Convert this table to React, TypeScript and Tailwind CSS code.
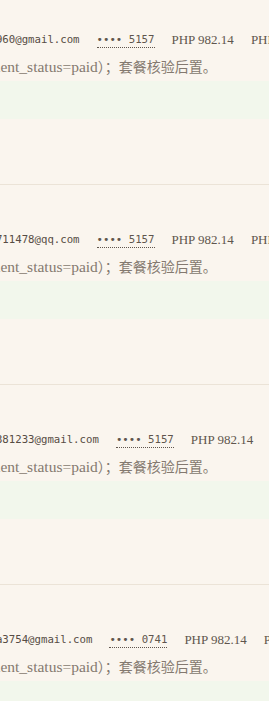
const rows = [
  { email: "mariacruz960@gmail.com", card: "5157" },
  { email: "zhangwei.711478@qq.com", card: "5157" },
  { email: "jdelacruz381233@gmail.com", card: "5157" },
  { email: "reyes.anna3754@gmail.com", card: "0741" },
];

const serif = "font-['Liberation_Serif','Noto_Sans_CJK_SC',serif]";
const mono = "font-['DejaVu_Sans_Mono',monospace] text-[10.7px]";

function OrderRow({ email, card }: { email: string; card: string }) {
  return (
    <div className="h-[200px] border-b border-[#ebe3d7] pt-[45px]">
      <div className="flex items-center gap-[17px] whitespace-nowrap">
        <span className={`${mono} text-[#564c44]`}>{email}</span>
        <span className={`${mono} border-b border-dotted border-[#5f554d] leading-[15px] text-[#5f554d]`}>
          •••• {card}
        </span>
        <span className={`${serif} text-[13px] text-[#5f554d]`}>PHP 982.14</span>
        <span className={`${serif} text-[13px] text-[#5f554d]`}>PHP 982.14</span>
      </div>
      <p className={`${serif} -ml-[28px] mt-[7px] whitespace-nowrap text-[14px] leading-5 text-[#84796f]`}>
        已支付（<span className="text-[15.5px]">payment_status=paid</span>）；套餐核验后置。
      </p>
      <div className="mt-[3px] h-[38px] bg-[#f2f7ec]" />
    </div>
  );
}

export default function App() {
  return (
    <div className="h-[701px] overflow-hidden bg-[#faf5ee]">
      <div className="-ml-[62px] -mt-[15px]">
        {rows.map((r) => (
          <OrderRow key={r.email} email={r.email} card={r.card} />
        ))}
      </div>
    </div>
  );
}
